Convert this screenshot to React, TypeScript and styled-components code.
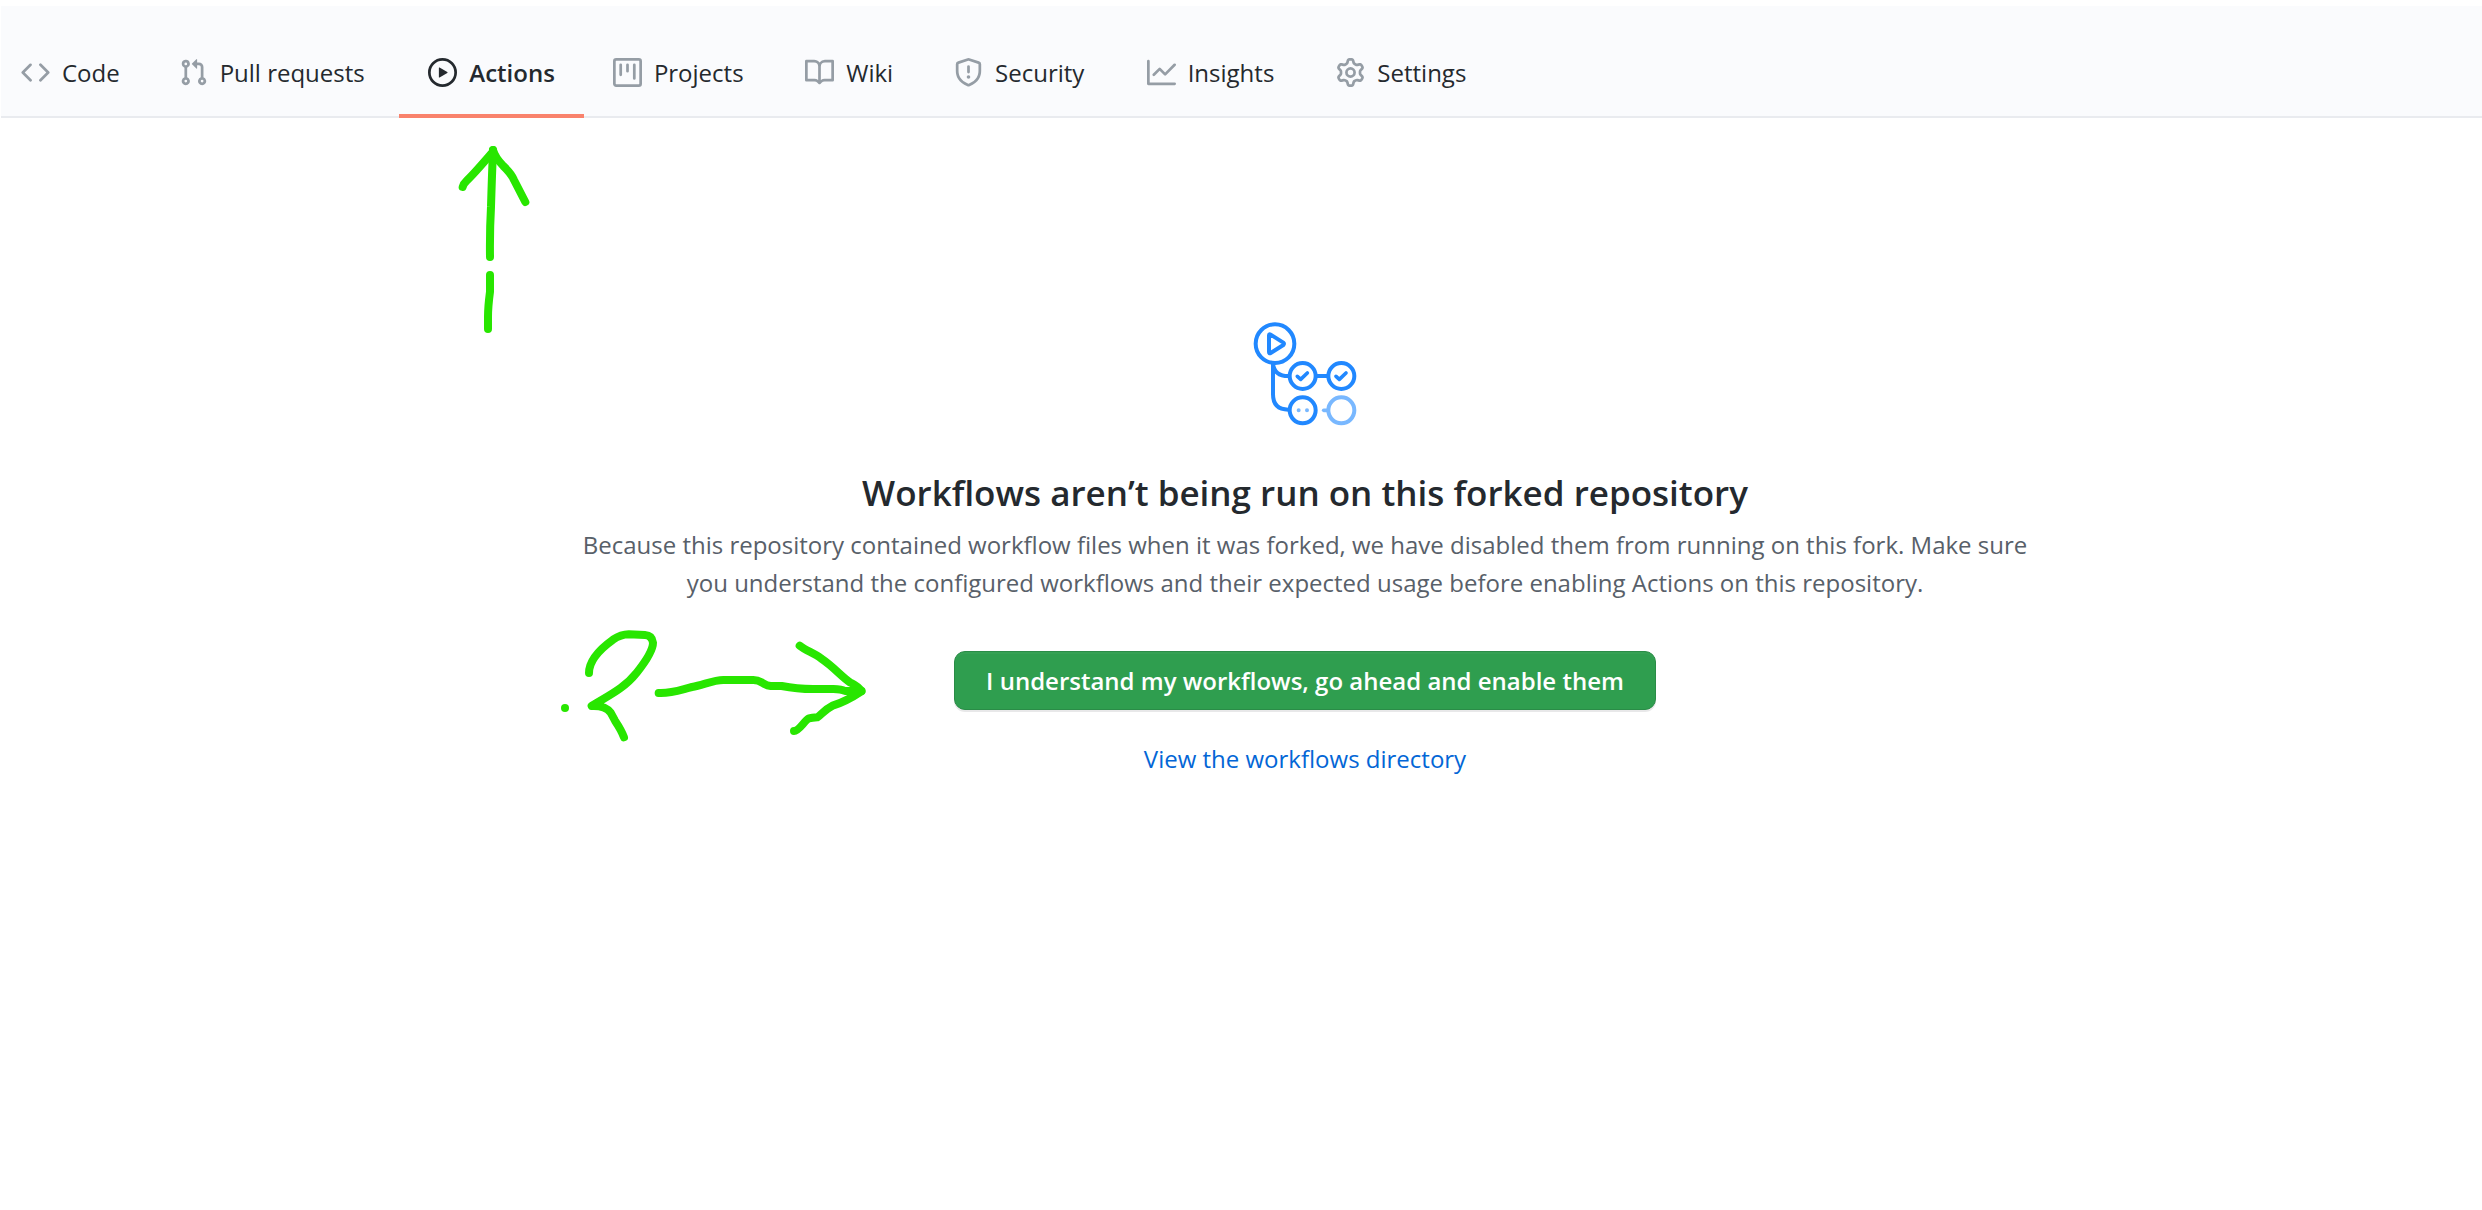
import React from "react";
import styled, { createGlobalStyle } from "styled-components";

const GlobalStyle = createGlobalStyle`
  *, *::before, *::after { box-sizing: border-box; }
  body {
    margin: 0;
    background: #ffffff;
    color: #24292e;
    font-family: "Segoe UI", "Open Sans", "Noto Sans", sans-serif;
    font-size: 24px;
    line-height: 38px;
  }
`;

const Page = styled.div`
  position: relative;
  padding: 6px 0 0 1px;
`;

const RepoNav = styled.nav`
  background: #fafbfd;
  padding-top: 21px;
  box-shadow: inset 0 -2px 0 #e9ebef;
  overflow: hidden;
`;

const TabList = styled.ul`
  display: flex;
  list-style: none;
  margin: 0 0 0 -9px;
  padding: 0;
`;

const Tab = styled.a<{ $active?: boolean }>`
  display: flex;
  align-items: center;
  gap: 12px;
  height: 91px;
  padding: 4px 29px 0;
  border-bottom: 4px solid ${(p) => (p.$active ? "#f9826c" : "transparent")};
  color: #24292e;
  font-weight: ${(p) => (p.$active ? 600 : 400)};
  text-decoration: none;
  white-space: nowrap;
`;

/* Reserves the bold width so that tabs keep their place when selected. */
const TabLabel = styled.span`
  &::after {
    content: attr(data-content);
    display: block;
    height: 0;
    overflow: hidden;
    visibility: hidden;
    font-weight: 600;
  }
`;

const TabIcon = styled.svg<{ $active?: boolean }>`
  flex: none;
  width: 29px;
  height: 29px;
  fill: ${(p) => (p.$active ? "#24292e" : "#959da5")};
`;

const Main = styled.main`
  display: flex;
  flex-direction: column;
  align-items: center;
  padding: 204px 0 64px 127px;
  text-align: center;
`;

const WorkflowArt = styled.svg`
  width: 104px;
  height: 104px;
  fill: none;
  stroke: #2188ff;
  stroke-width: 12;
  stroke-linecap: round;
  stroke-linejoin: round;
`;

const Title = styled.h1`
  margin: 43px 0 9px;
  font-size: 35px;
  font-weight: 600;
  line-height: 48px;
`;

const Description = styled.p`
  max-width: 1480px;
  margin: 0;
  color: #586069;
`;

const EnableButton = styled.button`
  height: 59px;
  margin: 49px 0 30px;
  padding: 0 31px;
  border: 1px solid #2a8c47;
  border-radius: 11px;
  background: #2f9e4f;
  box-shadow: 0 2px 0 rgba(27, 31, 35, 0.1), inset 0 2px 0 rgba(255, 255, 255, 0.03);
  color: #ffffff;
  font: inherit;
  font-weight: 600;
  cursor: pointer;
`;

const DirectoryLink = styled.a`
  color: #0366d6;
  text-decoration: none;
`;

const Marker = styled.svg`
  position: absolute;
  fill: none;
  stroke: #28e600;
  stroke-width: 24;
  stroke-linecap: round;
  stroke-linejoin: round;
  pointer-events: none;
`;

const UpArrow = styled(Marker)`
  left: 430px;
  top: 130px;
  width: 130px;
  height: 220px;
`;

const RightArrow = styled(Marker)`
  left: 540px;
  top: 610px;
  width: 360px;
  height: 150px;
`;

const tabs = [
  {
    label: "Code",
    path: "M4.72 3.22a.75.75 0 011.06 1.06L2.06 8l3.72 3.72a.75.75 0 11-1.06 1.06L.47 8.53a.75.75 0 010-1.06l4.25-4.25zm6.56 0a.75.75 0 10-1.06 1.06L13.94 8l-3.72 3.72a.75.75 0 101.06 1.06l4.25-4.25a.75.75 0 000-1.06l-4.25-4.25z",
  },
  {
    label: "Pull requests",
    path: "M7.177 3.073L9.573.677A.25.25 0 0110 .854v4.792a.25.25 0 01-.427.177L7.177 3.427a.25.25 0 010-.354zM3.75 2.5a.75.75 0 100 1.5.75.75 0 000-1.5zm-2.25.75a2.25 2.25 0 113 2.122v5.256a2.251 2.251 0 11-1.5 0V5.372A2.25 2.25 0 011.5 3.25zM11 2.5h-1V4h1a1 1 0 011 1v5.628a2.251 2.251 0 101.5 0V5A2.5 2.5 0 0011 2.5zm1 10.25a.75.75 0 111.5 0 .75.75 0 01-1.5 0zM3.75 12a.75.75 0 100 1.5.75.75 0 000-1.5z",
  },
  {
    label: "Actions",
    active: true,
    path: "M1.5 8a6.5 6.5 0 1113 0 6.5 6.5 0 01-13 0zM8 0a8 8 0 100 16A8 8 0 008 0zM6.379 5.227A.25.25 0 006 5.442v5.117a.25.25 0 00.379.214l4.264-2.559a.25.25 0 000-.428L6.379 5.227z",
  },
  {
    label: "Projects",
    path: "M1.75 0A1.75 1.75 0 000 1.75v12.5C0 15.216.784 16 1.75 16h12.5A1.75 1.75 0 0016 14.25V1.75A1.75 1.75 0 0014.25 0H1.75zM1.5 1.75a.25.25 0 01.25-.25h12.5a.25.25 0 01.25.25v12.5a.25.25 0 01-.25.25H1.75a.25.25 0 01-.25-.25V1.75zM11.75 3a.75.75 0 00-.75.75v7.5a.75.75 0 001.5 0v-7.5a.75.75 0 00-.75-.75zm-8.25.75a.75.75 0 011.5 0v5.5a.75.75 0 01-1.5 0v-5.5zM8 3a.75.75 0 00-.75.75v3.5a.75.75 0 001.5 0v-3.5A.75.75 0 008 3z",
  },
  {
    label: "Wiki",
    path: "M0 1.75A.75.75 0 01.75 1h4.253c1.227 0 2.317.59 3 1.501A3.744 3.744 0 0111.006 1h4.245a.75.75 0 01.75.75v10.5a.75.75 0 01-.75.75h-4.507a2.25 2.25 0 00-1.591.659l-.622.621a.75.75 0 01-1.06 0l-.622-.621A2.25 2.25 0 005.258 13H.75a.75.75 0 01-.75-.75V1.75zm8.755 3a2.25 2.25 0 012.25-2.25H14.5v9h-3.757c-.71 0-1.4.201-1.992.572l.004-7.322zm-1.504 7.324l.004-5.073-.002-2.253A2.25 2.25 0 005.003 2.5H1.5v9h3.757a3.75 3.75 0 011.994.574z",
  },
  {
    label: "Security",
    path: "M7.467.133a1.75 1.75 0 011.066 0l5.25 1.68A1.75 1.75 0 0115 3.48V7c0 1.566-.32 3.182-1.303 4.682-.983 1.498-2.585 2.813-5.032 3.855a1.7 1.7 0 01-1.33 0c-2.447-1.042-4.049-2.357-5.032-3.855C1.32 10.182 1 8.566 1 7V3.48a1.75 1.75 0 011.217-1.667l5.25-1.68zm.61 1.429a.25.25 0 00-.153 0l-5.25 1.68a.25.25 0 00-.174.238V7c0 1.358.275 2.666 1.057 3.86.784 1.194 2.121 2.34 4.366 3.297a.2.2 0 00.154 0c2.245-.956 3.582-2.104 4.366-3.298C13.225 9.666 13.5 8.36 13.5 7V3.48a.25.25 0 00-.174-.237l-5.25-1.68zM9 10.5a1 1 0 11-2 0 1 1 0 012 0zm-.25-5.75a.75.75 0 10-1.5 0v3a.75.75 0 001.5 0v-3z",
  },
  {
    label: "Insights",
    path: "M1.5 1.75a.75.75 0 00-1.5 0v12.5c0 .414.336.75.75.75h14.5a.75.75 0 000-1.5H1.5V1.75zm14.28 2.53a.75.75 0 00-1.06-1.06L10 7.94 7.53 5.47a.75.75 0 00-1.06 0L3.22 8.72a.75.75 0 001.06 1.06L7 7.06l2.47 2.47a.75.75 0 001.06 0l5.25-5.25z",
  },
  {
    label: "Settings",
    path: "M7.429 1.525a6.593 6.593 0 011.142 0c.036.003.108.036.137.146l.289 1.105c.147.56.55.967.997 1.189.174.086.341.183.501.29.417.278.97.423 1.53.27l1.102-.303c.11-.03.175.016.195.046.219.31.41.641.573.989.014.031.022.11-.059.19l-.815.806c-.411.406-.562.957-.53 1.456a4.588 4.588 0 010 .582c-.032.499.119 1.05.53 1.456l.815.806c.08.08.073.159.059.19a6.494 6.494 0 01-.573.99c-.02.029-.086.074-.195.045l-1.103-.303c-.559-.153-1.112-.008-1.529.27-.16.107-.327.204-.5.29-.449.222-.851.628-.998 1.189l-.289 1.105c-.029.11-.101.143-.137.146a6.613 6.613 0 01-1.142 0c-.036-.003-.108-.037-.137-.146l-.289-1.105c-.147-.56-.55-.967-.997-1.189a4.502 4.502 0 01-.501-.29c-.417-.278-.97-.423-1.53-.27l-1.102.303c-.11.03-.175-.016-.195-.046a6.492 6.492 0 01-.573-.989c-.014-.031-.022-.11.059-.19l.815-.806c.411-.406.562-.957.53-1.456a4.587 4.587 0 010-.582c.032-.499-.119-1.05-.53-1.456l-.815-.806c-.08-.08-.073-.159-.059-.19a6.44 6.44 0 01.573-.99c.02-.029.086-.075.195-.045l1.103.303c.559.153 1.112.008 1.529-.27.16-.107.327-.204.5-.29.449-.222.851-.628.998-1.189l.289-1.105c.029-.11.101-.143.137-.146zM8 0c-.236 0-.47.01-.701.03-.743.065-1.29.615-1.458 1.261l-.29 1.106c-.017.066-.078.158-.211.224a5.994 5.994 0 00-.668.386c-.123.082-.233.09-.3.071L3.27 2.776c-.644-.177-1.392.02-1.82.63a7.977 7.977 0 00-.704 1.217c-.315.675-.111 1.422.363 1.891l.815.806c.05.048.098.147.088.294a6.084 6.084 0 000 .772c.01.147-.038.246-.088.294l-.815.806c-.474.469-.678 1.216-.363 1.891.2.428.436.835.704 1.218.428.609 1.176.806 1.82.63l1.103-.303c.066-.019.176-.011.299.071.213.143.436.272.668.386.133.066.194.158.212.224l.289 1.106c.169.646.715 1.196 1.458 1.26a8.094 8.094 0 001.402 0c.743-.064 1.29-.614 1.458-1.26l.29-1.106c.017-.066.078-.158.211-.224a5.98 5.98 0 00.668-.386c.123-.082.233-.09.3-.071l1.102.302c.644.177 1.392-.02 1.82-.63.268-.382.505-.789.704-1.217.315-.675.111-1.422-.364-1.891l-.814-.806c-.05-.048-.098-.147-.088-.294a6.1 6.1 0 000-.772c-.01-.147.039-.246.088-.294l.814-.806c.475-.469.679-1.216.364-1.891a7.992 7.992 0 00-.704-1.218c-.428-.609-1.176-.806-1.82-.63l-1.103.303c-.066.019-.176.011-.299-.071a5.991 5.991 0 00-.668-.386c-.133-.066-.194-.158-.212-.224L10.16 1.29C9.99.645 9.444.095 8.701.031A8.094 8.094 0 008 0zm1.5 8a1.5 1.5 0 11-3 0 1.5 1.5 0 013 0zM11 8a3 3 0 11-6 0 3 3 0 016 0z",
  },
];

export default function App() {
  return (
    <Page>
      <GlobalStyle />
      <RepoNav aria-label="Repository">
        <TabList>
          {tabs.map((tab) => (
            <li key={tab.label}>
              <Tab href="#" $active={tab.active} aria-current={tab.active ? "page" : undefined}>
                <TabIcon viewBox="0 0 16 16" $active={tab.active} aria-hidden="true">
                  <path fillRule="evenodd" d={tab.path} />
                </TabIcon>
                <TabLabel data-content={tab.label}>{tab.label}</TabLabel>
              </Tab>
            </li>
          ))}
        </TabList>
      </RepoNav>

      <Main>
        <WorkflowArt viewBox="69 37 312 312" aria-hidden="true">
          <circle cx="135" cy="102" r="58" />
          <path d="M117 77v50q0 6 5 3l38-24q4-4 0-7l-38-24q-5-3-5 2z" />
          <path d="M129 162v92q0 46 46 46M129 162q4 37 46 37M262 199h28" />
          <circle cx="218" cy="199" r="39" />
          <circle cx="334" cy="199" r="39" />
          <path d="M202 200l10 9 20-19M318 200l10 9 20-19" strokeWidth="11" />
          <circle cx="218" cy="302" r="39" />
          <g stroke="#79b8ff">
            <path d="M206 302h0M231 302h0" />
            <path d="M281 302h12" strokeWidth="11" />
            <circle cx="334" cy="302" r="39" />
          </g>
        </WorkflowArt>
        <Title>Workflows aren’t being run on this forked repository</Title>
        <Description>
          Because this repository contained workflow files when it was forked, we have disabled them
          from running on this fork. Make sure you understand the configured workflows and their
          expected usage before enabling Actions on this repository.
        </Description>
        <EnableButton type="button">I understand my workflows, go ahead and enable them</EnableButton>
        <DirectoryLink href="#">View the workflows directory</DirectoryLink>
      </Main>

      <UpArrow viewBox="0 0 390 660" aria-hidden="true">
        <path d="M189 60Q186 130 183 230Q179 300 180 381" />
        <path d="M98 171Q101 160 110 152Q128 136 189 65" />
        <path d="M189 60Q195 82 220 108Q245 132 252 150L286 216" />
        <path d="M180 435V485Q174 530 174 560V597" />
      </UpArrow>

      <RightArrow viewBox="0 0 1080 450" aria-hidden="true">
        <path d="M75 294h0" />
        <path d="M147 189C147 150 180 117 219 89Q243 73 266 73L315 75Q336 76 339 98C339 122 317 154 290 188C252 236 204 257 155 288Q196 286 212 308L225 332Q245 362 252 382" />
        <path d="M356 249C395 251 420 240 456 231C490 225 520 210 550 210H640C665 210 670 226 692 228H725Q770 237 820 237H880Q905 238 915 243L965 243" />
        <path d="M779 107C800 124 822 128 844 146C880 170 905 200 930 217Q957 230 964 244C940 260 900 280 878 287C852 300 844 315 832 322Q815 323 807 325C792 333 778 363 762 363" />
      </RightArrow>
    </Page>
  );
}
